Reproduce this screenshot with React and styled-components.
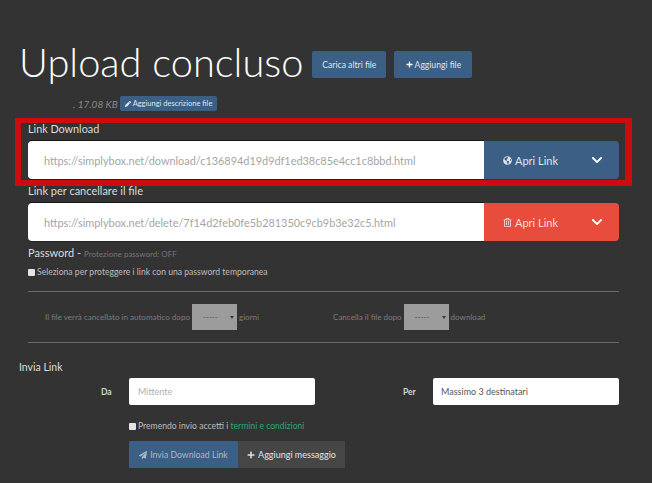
import React from "react";
import styled, { createGlobalStyle } from "styled-components";
import { FaPen, FaPlus, FaGlobeAmericas, FaChevronDown, FaRegTrashAlt, FaPaperPlane } from "react-icons/fa";

const Global = createGlobalStyle`
  html, body { margin: 0; padding: 0; background: #333333; }
  body { font-family: Lato, "Liberation Sans", sans-serif; color: #e4e4e4; width: 652px; height: 483px; overflow: hidden; }
  * { box-sizing: border-box; }
`;

const Page = styled.div`
  position: relative;
  width: 652px;
  height: 483px;
  padding: 40px 33px 0 20px;
  background: #333333;
`;
const Header = styled.div`
  display: flex;
  align-items: center;
  height: 44px;
  gap: 8px;
`;
const Title = styled.h1`
  margin: 0 1px 0 -1px;
  font-size: 39.8px;
  font-weight: 300;
  line-height: 44px;
  color: #ffffff;
  white-space: nowrap;
`;
const SmallButton = styled.div`
  display: flex;
  align-items: center;
  justify-content: center;
  gap: 2px;
  width: ${p => p.$w}px;
  height: 27px;
  margin-top: 5px;
  background: #3c5f85;
  border-radius: 2px;
  color: #dfe6ee;
  font-size: 8.6px;
  white-space: nowrap;
  svg { font-size: 7px; color: #ffffff; }
`;
const Meta = styled.div`
  display: flex;
  align-items: center;
  height: 15px;
  margin-top: 12px;
  padding-left: 53px;
  gap: 3px;
`;
const Size = styled.span`
  width: 44px;
  font-size: 10px;
  font-style: italic;
  color: #8a8a8a;
  white-space: nowrap;
`;
const Tag = styled.div`
  display: flex;
  align-items: center;
  justify-content: center;
  gap: 2px;
  width: 97px;
  height: 15px;
  background: #3c5f85;
  border-radius: 2px;
  color: #dfe6ee;
  font-size: 7.5px;
  white-space: nowrap;
  svg { font-size: 6px; }
`;
const Form = styled.div`
  margin-left: 8px;
  width: 591px;
`;
const Label = styled.div`
  height: 16px;
  font-size: ${p => p.$size}px;
  line-height: 16px;
  color: #dcdcdc;
  margin-top: ${p => p.$top}px;
`;
const LinkRow = styled.div`
  display: flex;
  height: 38px;
  margin-top: ${p => p.$top ?? 4}px;
`;
const UrlField = styled.div`
  flex: 1;
  display: flex;
  align-items: center;
  padding-left: 16px;
  background: #ffffff;
  border-radius: 4px 0 0 4px;
  box-shadow: 0 -1px 0 #151515, 0 1px 0 #222222;
  color: #a5a5a5;
  font-size: 10.9px;
  white-space: nowrap;
`;
const OpenButton = styled.div`
  display: flex;
  align-items: center;
  width: 135px;
  padding-left: 19px;
  background: ${p => p.$bg};
  border-radius: 0 4px 4px 0;
  color: ${p => p.$fg};
  font-size: 11px;
  svg { font-size: 9px; }
`;
const OpenLabel = styled.span`
  display: flex;
  align-items: center;
  gap: 3px;
  width: 88px;
`;
const Chevron = styled.span`
  display: flex;
  color: #ffffff;
  svg { font-size: 12px; }
`;
const PasswordRow = styled.div`
  display: flex;
  align-items: baseline;
  gap: 3px;
  height: 16px;
  margin-top: 4px;
  font-size: 11px;
  line-height: 16px;
  color: #dcdcdc;
`;
const Hint = styled.span`
  font-size: 8px;
  color: #777777;
`;
const CheckRow = styled.div`
  display: flex;
  align-items: center;
  gap: 2px;
  height: 12px;
  margin-top: ${p => p.$top}px;
  margin-left: ${p => p.$left || 0}px;
  font-size: 8.6px;
  color: #bdbdbd;
  white-space: nowrap;
`;
const CheckText = styled.span`
  display: block;
`;
const Box = styled.span`
  display: block;
  width: 7px;
  height: 7px;
  background: #e4e4e4;
  border-radius: 1px;
`;
const Green = styled.span`
  color: #2aa875;
`;
const Rule = styled.div`
  height: 1px;
  background: #6a6a6a;
  margin-top: ${p => p.$top}px;
`;
const Options = styled.div`
  display: flex;
  height: 26px;
  margin-top: 12px;
  padding-left: 17px;
`;
const OptionGroup = styled.div`
  display: flex;
  align-items: center;
  gap: 2px;
  width: ${p => p.$w}px;
  font-size: 8.05px;
  color: #7d7d7d;
  white-space: nowrap;
`;
const Picker = styled.div`
  display: flex;
  align-items: center;
  justify-content: space-between;
  flex: none;
  width: 45px;
  height: 26px;
  padding: 0 3px 0 11px;
  background: #9c9c9c;
  color: #4a4a4a;
  font-size: 8px;
`;
const Caret = styled.span`
  width: 0;
  height: 0;
  border-left: 2px solid transparent;
  border-right: 2px solid transparent;
  border-top: 3px solid #3a3a3a;
`;
const SendTitle = styled.div`
  height: 16px;
  margin: 16px 0 0 -9px;
  font-size: 10.5px;
  line-height: 16px;
  color: #dcdcdc;
`;
const SendRow = styled.div`
  display: flex;
  align-items: center;
  height: 27px;
  margin-top: 3px;
`;
const FieldLabel = styled.div`
  width: ${p => p.$w}px;
  padding-left: ${p => p.$pad}px;
  font-size: 8.5px;
  font-weight: 700;
  color: #d5d5d5;
`;
const TextField = styled.div`
  display: flex;
  align-items: center;
  width: 186px;
  height: 27px;
  padding-left: ${p => p.$pad}px;
  background: #ffffff;
  border-radius: 2px;
  font-size: 9px;
  color: ${p => p.$fg};
`;
const Actions = styled.div`
  display: flex;
  height: 27px;
  margin: 9px 0 0 101px;
`;
const ActionButton = styled.div`
  display: flex;
  align-items: center;
  justify-content: center;
  gap: 3px;
  width: ${p => p.$w}px;
  background: ${p => p.$bg};
  color: ${p => p.$fg};
  font-size: ${p => p.$size}px;
  white-space: nowrap;
  svg { font-size: 8px; }
`;
const Highlight = styled.div`
  position: absolute;
  left: 15px;
  top: 118px;
  width: 617px;
  height: 68px;
  border-style: solid;
  border-color: #cc0c0f;
  border-width: 5px 7px 6px 6px;
  pointer-events: none;
`;

export default function App() {
  return (
    <Page>
      <Global />
      <Header>
        <Title>Upload concluso</Title>
        <SmallButton $w={74}>Carica altri file</SmallButton>
        <SmallButton $w={78}><FaPlus />Aggiungi file</SmallButton>
      </Header>
      <Meta>
        <Size>. 17.08 KB</Size>
        <Tag><FaPen />Aggiungi descrizione file</Tag>
      </Meta>
      <Form>
        <Label $top={10} $size={10.8}>Link Download</Label>
        <LinkRow>
          <UrlField>https://simplybox.net/download/c136894d19d9df1ed38c85e4cc1c8bbd.html</UrlField>
          <OpenButton $bg="#3c5f85" $fg="#dfe6ee">
            <OpenLabel><FaGlobeAmericas />Apri Link</OpenLabel>
            <Chevron><FaChevronDown /></Chevron>
          </OpenButton>
        </LinkRow>
        <Label $top={4} $size={11}>Link per cancellare il file</Label>
        <LinkRow $top={4}>
          <UrlField>https://simplybox.net/delete/7f14d2feb0fe5b281350c9cb9b3e32c5.html</UrlField>
          <OpenButton $bg="#e74c3c" $fg="#f6dcd8">
            <OpenLabel><FaRegTrashAlt />Apri Link</OpenLabel>
            <Chevron><FaChevronDown /></Chevron>
          </OpenButton>
        </LinkRow>
        <PasswordRow>Password - <Hint>Protezione password: OFF</Hint></PasswordRow>
        <CheckRow $top={5}><Box /><CheckText>Seleziona per proteggere i link con una password temporanea</CheckText></CheckRow>
        <Rule $top={13} />
        <Options>
          <OptionGroup $w={288}>
            Il file verrà cancellato in automatico dopo
            <Picker>-----<Caret /></Picker>
            giorni
          </OptionGroup>
          <OptionGroup $w={200}>
            Cancella il file dopo
            <Picker>-----<Caret /></Picker>
            download
          </OptionGroup>
        </Options>
        <Rule $top={12} />
        <SendTitle>Invia Link</SendTitle>
        <SendRow>
          <FieldLabel $w={101} $pad={73}>Da</FieldLabel>
          <TextField $pad={9} $fg="#b0b0b0">Mittente</TextField>
          <FieldLabel $w={118} $pad={88}>Per</FieldLabel>
          <TextField $pad={8} $fg="#555555">Massimo 3 destinatari</TextField>
        </SendRow>
        <CheckRow $top={15} $left={101}><Box /><CheckText>Premendo invio accetti i <Green>termini e condizioni</Green></CheckText></CheckRow>
        <Actions>
          <ActionButton $w={109} $size={8.7} $bg="#3c5f85" $fg="#aab9c9"><FaPaperPlane />Invia Download Link</ActionButton>
          <ActionButton $w={107} $size={9} $bg="#464646" $fg="#e4e4e4"><FaPlus />Aggiungi messaggio</ActionButton>
        </Actions>
      </Form>
      <Highlight />
    </Page>
  );
}
